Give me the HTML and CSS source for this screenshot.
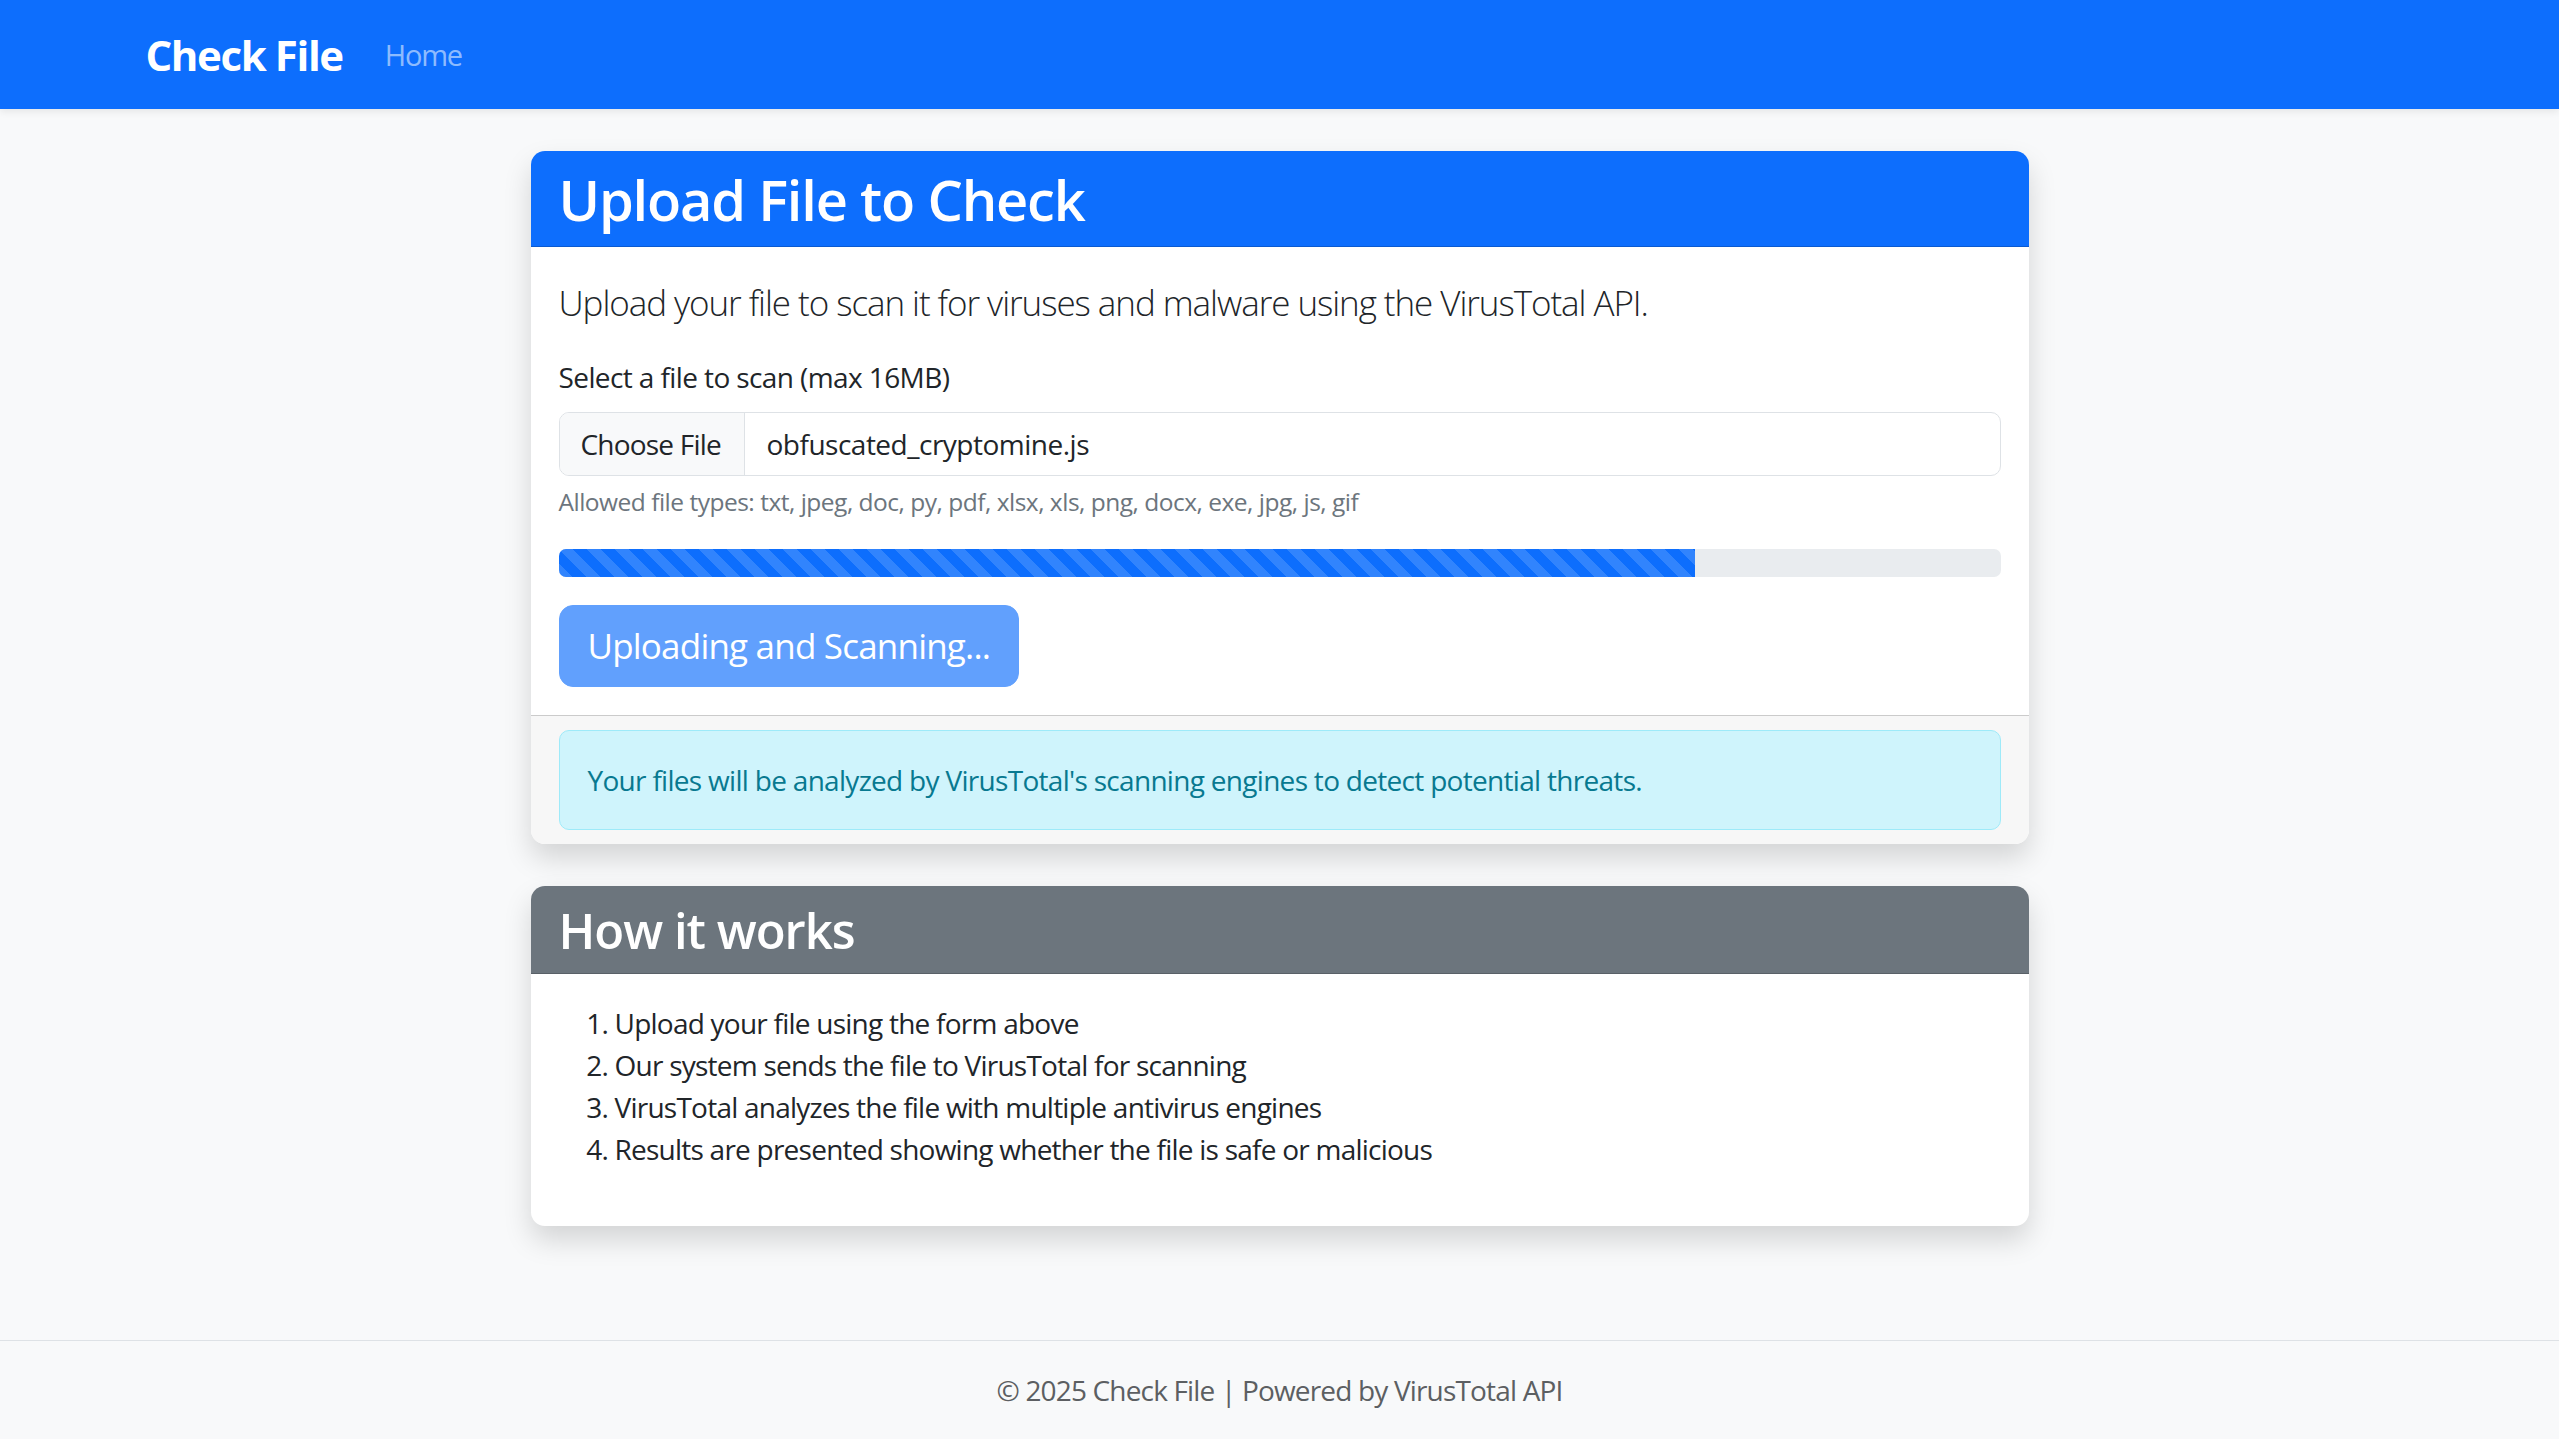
FILE: index.html
```html
<!DOCTYPE html>
<html lang="en">
<head>
<meta charset="utf-8">
<title>Check File</title>
<link rel="stylesheet" href="styles.css">
</head>
<body>
<nav class="navbar">
  <div class="nav-inner">
    <a class="brand" href="#">Check File</a>
    <a class="nav-link" href="#">Home</a>
  </div>
</nav>
<main class="main">
  <section class="card">
    <div class="card-header header-primary"><h2 class="title">Upload File to Check</h2></div>
    <div class="card-body">
      <p class="lead">Upload your file to scan it for viruses and malware using the VirusTotal API.</p>
      <div class="field">
        <label class="form-label">Select a file to scan (max 16MB)</label>
        <div class="file-input"><span class="file-btn">Choose File</span><span class="file-name">obfuscated_cryptomine.js</span></div>
        <div class="form-text">Allowed file types: txt, jpeg, doc, py, pdf, xlsx, xls, png, docx, exe, jpg, js, gif</div>
      </div>
      <div class="progress"><div class="progress-bar" style="width:78.8%"></div></div>
      <button class="btn" disabled>Uploading and Scanning...</button>
    </div>
    <div class="card-footer">
      <div class="alert">Your files will be analyzed by VirusTotal's scanning engines to detect potential threats.</div>
    </div>
  </section>
  <section class="card">
    <div class="card-header header-secondary"><h3 class="title-sm">How it works</h3></div>
    <div class="card-body">
      <ol class="steps">
        <li>Upload your file using the form above</li>
        <li>Our system sends the file to VirusTotal for scanning</li>
        <li>VirusTotal analyzes the file with multiple antivirus engines</li>
        <li>Results are presented showing whether the file is safe or malicious</li>
      </ol>
    </div>
  </section>
</main>
<footer class="footer">© 2025 Check File | Powered by VirusTotal API</footer>
</body>
</html>
```
FILE: styles.css
```css
* { box-sizing: border-box; }
html, body { margin: 0; padding: 0; }
body {
  font-family: "Open Sans", "Noto Sans", sans-serif;
  font-size: 28px;
  line-height: 1.5;
  color: #212529;
  background: #f8f9fa;
  min-height: 100vh;
  display: flex;
  flex-direction: column;
}
.navbar {
  background: #0d6efd;
  height: 109px;
  display: flex;
  align-items: center;
  box-shadow: 0 3px 7px rgba(0,0,0,.075);
  position: relative;
  z-index: 1;
}
.nav-inner {
  width: 2310px;
  margin: 0 auto;
  padding: 0 21px;
  display: flex;
  align-items: center;
}
.brand {
  font-size: 42px;
  font-weight: 700;
  color: #fff;
  text-decoration: none;
  margin-right: 28px;
  line-height: 63px;
  letter-spacing: -1.4px;
}
.nav-link {
  color: rgba(255,255,255,.55);
  text-decoration: none;
  padding: 0 14px;
  font-size: 29px;
  letter-spacing: -1.2px;
}
.main {
  flex: 1 0 auto;
  width: 1498px;
  margin: 42px auto 0;
}
.card {
  background: #fff;
  border-radius: 14px;
  box-shadow: 0 14px 28px rgba(0,0,0,.15);
  margin-bottom: 42px;
  overflow: hidden;
}
.card-header {
  padding: 15px 28px 13px;
  border-bottom: 1px solid rgba(0,0,0,.175);
  color: #fff;
}
.header-primary { background: #0d6efd; }
.header-secondary { background: #6c757d; }
.title {
  margin: 0;
  font-size: 56px;
  font-weight: 600;
  line-height: 1.2;
  letter-spacing: -1.2px;
}
.title-sm {
  margin: 0;
  font-size: 49px;
  font-weight: 600;
  line-height: 1.2;
  letter-spacing: -1px;
}
.card-body { padding: 28px; }
.lead {
  font-size: 35px;
  font-weight: 300;
  margin: 0 0 26px;
  padding-top: 2px;
  letter-spacing: -1.06px;
}
.field { margin-bottom: 29px; }
.form-label {
  display: block;
  margin-bottom: 14px;
  letter-spacing: -0.6px;
}
.file-input {
  display: flex;
  height: 64px;
  border: 1px solid #dee2e6;
  border-radius: 10px;
  overflow: hidden;
  background: #fff;
  letter-spacing: -0.5px;
  white-space: nowrap;
}
.file-btn {
  display: flex;
  align-items: center;
  padding: 0 21px;
  width: 185px;
  flex-shrink: 0;
  background: #f8f9fa;
  border-right: 1px solid #dee2e6;
  letter-spacing: -0.8px;
}
.file-name {
  display: flex;
  align-items: center;
  padding: 0 22px;
}
.form-text {
  margin-top: 8px;
  font-size: 24.5px;
  color: #6c757d;
  letter-spacing: -0.5px;
}
.progress {
  height: 28px;
  background: #e9ecef;
  border-radius: 7px;
  overflow: hidden;
  margin-bottom: 28px;
  display: flex;
}
.progress-bar {
  height: 100%;
  background-color: #0d6efd;
  background-image: linear-gradient(45deg, rgba(255,255,255,.15) 25%, transparent 25%, transparent 50%, rgba(255,255,255,.15) 50%, rgba(255,255,255,.15) 75%, transparent 75%, transparent);
  background-size: 28px 28px;
}
.btn {
  display: block;
  font-family: inherit;
  font-size: 35px;
  line-height: 1.5;
  padding: 14px 28px;
  height: 82px;
  border: 1px solid #0d6efd;
  border-radius: 14px;
  background: #0d6efd;
  color: #fff;
  opacity: .65;
  letter-spacing: -0.8px;
}
.card-footer {
  padding: 14px 28px;
  background: #f7f7f7;
  border-top: 1px solid rgba(0,0,0,.175);
}
.alert {
  padding: 28px;
  background: #cff4fc;
  border: 1px solid #9eeaf9;
  color: #087990;
  border-radius: 10px;
  letter-spacing: -0.7px;
}
.steps {
  margin: 0 0 28px;
  padding-left: 56px;
  letter-spacing: -0.76px;
}
.footer {
  flex-shrink: 0;
  border-top: 1px solid #dee2e6;
  background: #f8f9fa;
  padding: 28px 0;
  text-align: center;
  color: #5c5f62;
  letter-spacing: -0.83px;
}
```
